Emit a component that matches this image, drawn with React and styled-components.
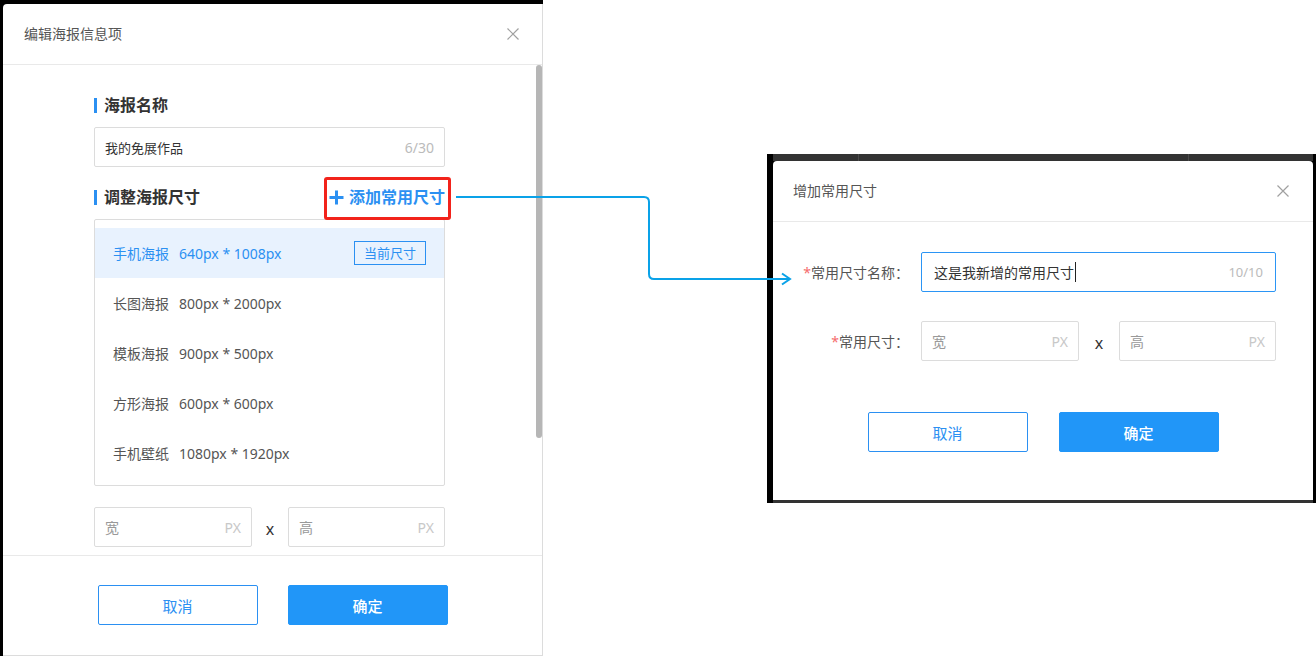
import React from "react";
import styled, { createGlobalStyle } from "styled-components";

const BLUE = "#2b90f2";

const Global = createGlobalStyle`
  html, body { margin: 0; padding: 0; background: #fff; }
  body { font-family: "Noto Sans", "Noto Sans CJK SC", sans-serif; color: #333; }
  * { box-sizing: border-box; }
`;

const Page = styled.div`
  position: relative;
  width: 1316px;
  height: 656px;
  overflow: hidden;
  display: flex;
  align-items: flex-start;
`;

const LeftBackdrop = styled.div`
  flex-shrink: 0;
  width: 543px;
  height: 656px;
  background: #000;
  padding: 4px 0 0 3px;
`;

const Dialog = styled.div`
  width: 540px;
  height: ${(p) => p.$h}px;
  background: #fff;
  display: flex;
  flex-direction: column;
  border-radius: ${(p) => (p.$framed ? "4px 4px 0 0" : "4px 0 0 0")};
  border-right: ${(p) => (p.$framed ? "none" : "1px solid #dcdcdc")};
  border-bottom: ${(p) => (p.$framed ? "none" : "1px solid #dcdcdc")};
`;

const Header = styled.div`
  flex-shrink: 0;
  height: 61px;
  border-bottom: 1px solid #e9e9e9;
  display: flex;
  align-items: center;
  justify-content: space-between;
  padding: 0 ${(p) => p.$pr}px 0 ${(p) => p.$pl}px;
`;

const HeaderTitle = styled.div`
  font-size: 14px;
  color: #555;
  line-height: 20px;
`;

const CloseBtn = styled.svg`
  width: 12px;
  height: 12px;
  display: block;
`;

const Close = () => (
  <CloseBtn viewBox="0 0 12 12">
    <path d="M0.5 0.5 L11.5 11.5 M11.5 0.5 L0.5 11.5" stroke="#a0a0a0" strokeWidth="1.2" fill="none" />
  </CloseBtn>
);

const Body = styled.div`
  position: relative;
  height: 490px;
  flex-shrink: 0;
  overflow: hidden;
  padding: 29px 0 0 91px;
`;

const Content = styled.div`
  width: 351px;
`;

const Thumb = styled.div`
  position: absolute;
  top: 0;
  right: 0;
  width: 6px;
  height: 373px;
  border-radius: 3px;
  background: #b6b6b6;
`;

const SectionRow = styled.div`
  height: 22px;
  display: flex;
  align-items: center;
  justify-content: space-between;
  margin-bottom: 11px;
`;

const SectionTitle = styled.div`
  display: flex;
  align-items: center;
  gap: 7px;
  font-size: 16px;
  font-weight: 700;
  color: #333;
  line-height: 22px;
`;

const Bar = styled.span`
  width: 3px;
  height: 15px;
  background: ${BLUE};
`;

const AddButton = styled.div`
  position: relative;
  display: flex;
  align-items: center;
  gap: 5px;
  font-size: 16px;
  font-weight: 700;
  color: ${BLUE};
  line-height: 22px;
  &::after {
    content: "";
    position: absolute;
    left: -5px;
    right: -6px;
    top: -9px;
    bottom: -12px;
    border: 3px solid #f2231b;
    border-radius: 3px;
  }
`;

const PlusIcon = styled.svg`
  width: 15px;
  height: 15px;
  display: block;
`;

const Field = styled.div`
  height: 40px;
  border: 1px solid ${(p) => (p.$focus ? "#2b95f5" : "#dcdcdc")};
  border-radius: 2px;
  display: flex;
  align-items: center;
  justify-content: space-between;
  padding: 0 ${(p) => p.$pad}px;
  margin-bottom: ${(p) => p.$mb || 0}px;
  background: #fff;
`;

const FieldText = styled.span`
  display: flex;
  align-items: center;
  font-size: ${(p) => p.$size || 13}px;
  color: ${(p) => p.$color || "#333"};
`;

const Caret = styled.span`
  width: 1px;
  height: 20px;
  background: #222;
  margin-left: 1px;
`;

const Counter = styled.span`
  font-size: ${(p) => p.$size || 14}px;
  color: #bbb;
`;

const List = styled.div`
  border: 1px solid #dcdcdc;
  border-radius: 2px;
  padding: 8px 0 7px;
`;

const Row = styled.div`
  height: 50px;
  display: flex;
  align-items: center;
  gap: 10px;
  padding: 0 18px;
  font-size: 14px;
  background: ${(p) => (p.$active ? "#e8f2fe" : "transparent")};
  color: ${(p) => (p.$active ? BLUE : "#555")};
`;

const Tag = styled.span`
  margin-left: auto;
  height: 24px;
  line-height: 22px;
  padding: 0 9px;
  border: 1px solid ${BLUE};
  color: ${BLUE};
  font-size: 13px;
`;

const SizeRow = styled.div`
  display: grid;
  grid-template-columns: ${(p) => p.$cols};
  align-items: center;
  margin-top: ${(p) => p.$mt || 0}px;
`;

const Times = styled.span`
  text-align: center;
  font-size: 16px;
  color: #333;
  line-height: 20px;
  padding-top: 3px;
`;

const Placeholder = styled.span`
  font-size: 14px;
  color: #999;
`;

const Unit = styled.span`
  font-size: 14px;
  color: #c8c8c8;
`;

const Footer = styled.div`
  flex: 1;
  border-top: 1px solid #e9e9e9;
  display: flex;
  justify-content: center;
  gap: 30px;
  padding-top: 29px;
`;

const Button = styled.div`
  width: 160px;
  height: 40px;
  border-radius: 2px;
  display: flex;
  align-items: center;
  justify-content: center;
  font-size: 15px;
  border: 1px solid ${BLUE};
  background: ${(p) => (p.$primary ? "#2196f8" : "#fff")};
  border-color: ${(p) => (p.$primary ? "#2196f8" : BLUE)};
  color: ${(p) => (p.$primary ? "#fff" : BLUE)};
  font-weight: ${(p) => (p.$primary ? 500 : 400)};
`;

/* Right side */
const Frame = styled.div`
  flex-shrink: 0;
  margin: 154px 0 0 224px;
  background: #000;
  padding: 0 3px 0 6px;
  display: flex;
  flex-direction: column;
`;

const Mask = styled.div`
  height: ${(p) => p.$h}px;
  background: #333;
  display: flex;
`;

const GhostBox = styled.div`
  margin-left: 85px;
  width: 331px;
  height: 100%;
  border-left: 1px solid #4a4a4a;
  border-right: 1px solid #4a4a4a;
`;

const FormBody = styled.div`
  padding-top: 30px;
`;

const FormGrid = styled.div`
  display: grid;
  grid-template-columns: 116px 355px;
  column-gap: 12px;
  row-gap: 29px;
  align-items: center;
  margin-left: 20px;
`;

const Label = styled.div`
  text-align: right;
  font-size: 14px;
  color: #555;
  white-space: nowrap;
`;

const Star = styled.span`
  color: #f56c6c;
`;

const ButtonRow = styled.div`
  display: flex;
  justify-content: center;
  gap: 31px;
  margin-top: 51px;
`;

const Connector = styled.svg`
  position: absolute;
  left: 0;
  top: 0;
  width: 1316px;
  height: 656px;
  pointer-events: none;
`;

const sizes = [
  ["手机海报", "640px * 1008px", true],
  ["长图海报", "800px * 2000px"],
  ["模板海报", "900px * 500px"],
  ["方形海报", "600px * 600px"],
  ["手机壁纸", "1080px * 1920px"],
];

export default function App() {
  return (
    <>
      <Global />
      <Page>
        <LeftBackdrop>
          <Dialog $h={652}>
            <Header $pl={21} $pr={23}>
              <HeaderTitle>编辑海报信息项</HeaderTitle>
              <Close />
            </Header>
            <Body>
              <Content>
                <SectionRow>
                  <SectionTitle>
                    <Bar />
                    海报名称
                  </SectionTitle>
                </SectionRow>
                <Field $pad={10} $mb={19}>
                  <FieldText>我的免展作品</FieldText>
                  <Counter>6/30</Counter>
                </Field>
                <SectionRow>
                  <SectionTitle>
                    <Bar />
                    调整海报尺寸
                  </SectionTitle>
                  <AddButton>
                    <PlusIcon viewBox="0 0 15 15">
                      <path d="M7.5 0.5 V14.5 M0.5 7.5 H14.5" stroke={BLUE} strokeWidth="3" fill="none" />
                    </PlusIcon>
                    添加常用尺寸
                  </AddButton>
                </SectionRow>
                <List>
                  {sizes.map(([name, dim, active]) => (
                    <Row key={name} $active={active}>
                      <span>{name}</span>
                      <span>{dim}</span>
                      {active && <Tag>当前尺寸</Tag>}
                    </Row>
                  ))}
                </List>
                <SizeRow $cols="158px 1fr 157px" $mt={21}>
                  <Field $pad={10}>
                    <Placeholder>宽</Placeholder>
                    <Unit>PX</Unit>
                  </Field>
                  <Times>x</Times>
                  <Field $pad={10}>
                    <Placeholder>高</Placeholder>
                    <Unit>PX</Unit>
                  </Field>
                </SizeRow>
              </Content>
              <Thumb />
            </Body>
            <Footer>
              <Button>取消</Button>
              <Button $primary>确定</Button>
            </Footer>
          </Dialog>
        </LeftBackdrop>

        <Frame>
          <Mask $h={7}>
            <GhostBox />
          </Mask>
          <Dialog $h={339} $framed>
            <Header $pl={20} $pr={24}>
              <HeaderTitle>增加常用尺寸</HeaderTitle>
              <Close />
            </Header>
            <FormBody>
              <FormGrid>
                <Label>
                  <Star>*</Star>常用尺寸名称：
                </Label>
                <Field $pad={12} $focus>
                  <FieldText $size={14}>
                    这是我新增的常用尺寸
                    <Caret />
                  </FieldText>
                  <Counter $size={13}>10/10</Counter>
                </Field>
                <Label>
                  <Star>*</Star>常用尺寸：
                </Label>
                <SizeRow $cols="158px 1fr 157px">
                  <Field $pad={10}>
                    <Placeholder>宽</Placeholder>
                    <Unit>PX</Unit>
                  </Field>
                  <Times>x</Times>
                  <Field $pad={10}>
                    <Placeholder>高</Placeholder>
                    <Unit>PX</Unit>
                  </Field>
                </SizeRow>
              </FormGrid>
              <ButtonRow>
                <Button>取消</Button>
                <Button $primary>确定</Button>
              </ButtonRow>
            </FormBody>
          </Dialog>
          <Mask $h={3} />
        </Frame>

        <Connector viewBox="0 0 1316 656">
          <path
            d="M456 197 H644 Q649 197 649 202 V274 Q649 279 654 279 H789"
            stroke="#0aa2e8"
            strokeWidth="2"
            fill="none"
          />
          <path d="M782 273.5 L790 279 L782 284.5" stroke="#0aa2e8" strokeWidth="2" fill="none" />
        </Connector>
      </Page>
    </>
  );
}
